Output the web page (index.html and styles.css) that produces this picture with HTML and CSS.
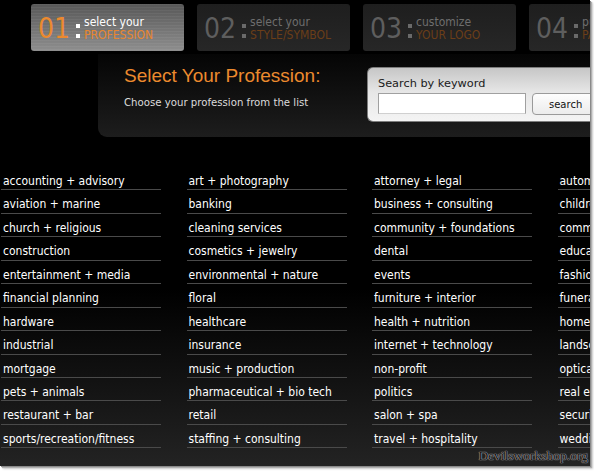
FILE: index.html
```html
<!DOCTYPE html>
<html>
<head>
<meta charset="utf-8">
<link rel="stylesheet" href="styles.css">
</head>
<body>
<div class="frame">
  <div class="tabs">
    <div class="tab active">
      <span class="num">01</span><span class="colon"><i></i><i></i></span>
      <span class="label"><span class="l1">select your</span><span class="l2">PROFESSION</span></span>
    </div>
    <div class="tab">
      <span class="num">02</span><span class="colon"><i></i><i></i></span>
      <span class="label"><span class="l1">select your</span><span class="l2">STYLE/SYMBOL</span></span>
    </div>
    <div class="tab">
      <span class="num">03</span><span class="colon"><i></i><i></i></span>
      <span class="label"><span class="l1">customize</span><span class="l2">YOUR LOGO</span></span>
    </div>
    <div class="tab">
      <span class="num">04</span><span class="colon"><i></i><i></i></span>
      <span class="label"><span class="l1">purchase</span><span class="l2">PACKAGE</span></span>
    </div>
  </div>

  <div class="panel">
    <div class="intro">
      <h1 class="title">Select Your Profession:</h1>
      <p class="sub">Choose your profession from the list</p>
    </div>
    <div class="search">
      <div class="search-label">Search by keyword</div>
      <div class="search-row">
        <input class="search-input" type="text">
        <button class="search-btn">search</button>
      </div>
    </div>
  </div>

  <div class="list">
    <div class="col">
      <a>accounting + advisory</a>
      <a>aviation + marine</a>
      <a>church + religious</a>
      <a>construction</a>
      <a>entertainment + media</a>
      <a>financial planning</a>
      <a>hardware</a>
      <a>industrial</a>
      <a>mortgage</a>
      <a>pets + animals</a>
      <a>restaurant + bar</a>
      <a>sports/recreation/fitness</a>
    </div>
    <div class="col">
      <a>art + photography</a>
      <a>banking</a>
      <a>cleaning services</a>
      <a>cosmetics + jewelry</a>
      <a>environmental + nature</a>
      <a>floral</a>
      <a>healthcare</a>
      <a>insurance</a>
      <a>music + production</a>
      <a>pharmaceutical + bio tech</a>
      <a>retail</a>
      <a>staffing + consulting</a>
    </div>
    <div class="col">
      <a>attorney + legal</a>
      <a>business + consulting</a>
      <a>community + foundations</a>
      <a>dental</a>
      <a>events</a>
      <a>furniture + interior</a>
      <a>health + nutrition</a>
      <a>internet + technology</a>
      <a>non-profit</a>
      <a>politics</a>
      <a>salon + spa</a>
      <a>travel + hospitality</a>
    </div>
    <div class="col">
      <a>automotive</a>
      <a>children</a>
      <a>communications</a>
      <a>education</a>
      <a>fashion</a>
      <a>funeral</a>
      <a>home</a>
      <a>landscaping</a>
      <a>optical</a>
      <a>real estate</a>
      <a>security</a>
      <a>wedding</a>
    </div>
  </div>

  <div class="watermark">Devilsworkshop.org</div>
</div>
</body>
</html>
```

FILE: styles.css
```css
html, body {
  margin: 0;
  padding: 0;
  background: #ffffff;
}
body {
  width: 594px;
  height: 472px;
  overflow: hidden;
  font-family: "DejaVu Sans Condensed", "DejaVu Sans", sans-serif;
}
.frame {
  position: relative;
  width: 590px;
  height: 466px;
  overflow: hidden;
  background: linear-gradient(to bottom, #000 0%, #000 62%, #232323 100%);
  box-shadow: 1px 1px 0 #8a8a8a, 2px 2px 1px #b0b0b0, 3px 3px 2px #d0d0d0;
}

/* tabs */
.tabs {
  display: flex;
  gap: 13px;
  padding: 4px 0 0 31px;
  width: 800px;
}
.tab {
  flex: 0 0 153px;
  height: 47px;
  box-sizing: border-box;
  border-radius: 3px;
  background: linear-gradient(to bottom, #1e1e1e, #272727);
  display: flex;
  align-items: center;
  padding-left: 7px;
  overflow: hidden;
}
.tab.active {
  background:
    repeating-linear-gradient(to bottom, rgba(255,255,255,0.05) 0 1px, rgba(0,0,0,0) 1px 3px),
    linear-gradient(to bottom, #575757, #8e8e8e);
}
.num {
  font-size: 28px;
  line-height: 1;
  color: #5e5e5e;
  margin-top: 3px;
}
.tab.active .num { color: #ec8a2e; }
.colon {
  display: flex;
  flex-direction: column;
  gap: 6px;
  margin: 7px 4px 0 6px;
}
.colon i {
  display: block;
  width: 4px;
  height: 4px;
  background: #6a6a6a;
}
.tab.active .colon i { background: #ffffff; }
.label {
  display: flex;
  flex-direction: column;
  font-size: 12px;
  line-height: 13px;
  margin-top: 3px;
  white-space: nowrap;
}
.l1 { color: #6e6e6e; }
.l2 { color: #6b3e18; }
.tab.active .l1 { color: #ffffff; }
.tab.active .l2 { color: #e8862e; }

/* header panel */
.panel {
  margin: 3px 0 0 98px;
  height: 83px;
  background: linear-gradient(to bottom, #050505, #1d1d1d);
  border-bottom-left-radius: 9px;
  display: flex;
}
.intro {
  flex: 0 0 243px;
  padding: 11px 0 0 26px;
}
.title {
  margin: 0;
  font-family: "Liberation Sans", Arial, sans-serif;
  font-weight: normal;
  font-size: 19px;
  line-height: 22px;
  color: #ec8a2e;
}
.sub {
  margin: 9px 0 0;
  font-size: 11.3px;
  color: #dcdcdc;
}
.search {
  flex: 0 0 240px;
  margin-top: 13px;
  height: 55px;
  box-sizing: border-box;
  border: 1px solid #7d7d7d;
  border-right: none;
  border-radius: 6px 0 0 6px;
  background: linear-gradient(to bottom, #c6c6c6, #e6e6e6 45%, #f4f4f4);
  padding: 9px 0 0 10px;
}
.search-label {
  font-family: "DejaVu Sans", sans-serif;
  font-size: 11.3px;
  color: #1a1a1a;
  line-height: 14px;
}
.search-row {
  display: flex;
  gap: 6px;
  margin-top: 2px;
}
.search-input {
  width: 148px;
  height: 21px;
  box-sizing: border-box;
  border: 1px solid #a0a0a0;
  border-bottom-color: #d0d0d0;
  background: #fff;
  padding: 0;
  margin: 0;
}
.search-btn {
  width: 70px;
  height: 22px;
  box-sizing: border-box;
  border: 1px solid #9a9a9a;
  border-radius: 4px;
  background: linear-gradient(to bottom, #fdfdfd, #ececec);
  font-family: "DejaVu Sans", sans-serif;
  font-size: 10px;
  color: #111;
  text-align: left;
  padding: 0 0 0 16px;
  margin: 0;
}

/* list */
.list {
  display: grid;
  grid-template-columns: repeat(4, 160px);
  column-gap: 25.5px;
  padding: 30px 0 0 1px;
}
.col {
  display: flex;
  flex-direction: column;
}
.col a {
  display: block;
  height: 23.45px;
  box-sizing: border-box;
  border-bottom: 1px solid #4a4a4a;
  font-size: 12px;
  line-height: 14px;
  padding: 7px 0 0 2px;
  color: #ffffff;
  white-space: nowrap;
}

.watermark {
  position: absolute;
  right: 2px;
  bottom: 2px;
  font-family: "Liberation Serif", "Times New Roman", serif;
  font-size: 13.5px;
  line-height: 16px;
  color: #121212;
  text-shadow: 0 0 1px #b0b0b0, 0 0 1px #b0b0b0, 0 0 1px #909090;
}
```
